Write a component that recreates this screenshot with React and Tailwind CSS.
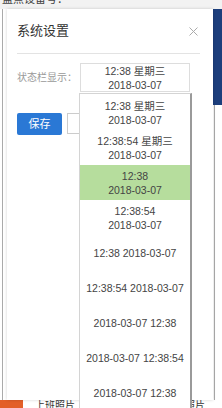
export default function App() {
  const items = [
    ["12:38 星期三", "2018-03-07"],
    ["12:38:54 星期三", "2018-03-07"],
    ["12:38", "2018-03-07"],
    ["12:38:54", "2018-03-07"],
    ["12:38 2018-03-07"],
    ["12:38:54 2018-03-07"],
    ["2018-03-07 12:38"],
    ["2018-03-07 12:38:54"],
    ["2018-03-07 12:38"],
  ];
  return (
    <div className="relative w-[222px] h-[408px] overflow-hidden bg-white font-['Liberation_Sans','Noto_Sans_CJK_SC',sans-serif]">
      {/* background page */}
      <div className="flex flex-col h-full">
        <div className="h-[9px] bg-[#f2f2f2] overflow-hidden">
          <div className="mt-[-7px] pl-[2px] text-[11px] leading-[12px] text-[#444] whitespace-nowrap">盘点设备号：</div>
        </div>
        <div className="flex flex-1">
          <div className="w-[7px] flex pl-[2px]">
            <div className="w-px bg-[#aaa]" />
          </div>
          <div className="flex-1" />
          <div className="w-[9px] flex flex-col">
            <div className="h-[96px] bg-[#1c3e7c]" />
            <div className="flex-1 flex pl-px">
              <div className="w-px bg-[#aaa]" />
            </div>
          </div>
        </div>
        <div className="h-[8px] flex items-start text-[10px] leading-[10px] text-[#333] whitespace-nowrap overflow-hidden">
          <div className="w-[23px] h-full bg-[#e35f28]" />
          <div className="ml-[12px] w-[55px] mt-[1px]">上班照片</div>
          <div className="w-[63px] h-full bg-[#e35f28]" />
          <div className="ml-[12px] mt-[1px]">下班照片</div>
        </div>
      </div>

      {/* modal */}
      <div className="absolute left-[7px] top-[9px] w-[206px] h-[391px] bg-white shadow-[0_0_3px_rgba(0,0,0,0.18)] flex flex-col">
        <div className="h-[44px] flex items-center justify-between pl-[10px] pr-[15px]">
          <span className="text-[13px] text-[#333]">系统设置</span>
          <svg width="9" height="9" viewBox="0 0 9 9">
            <path d="M0.5 0.5 L8.5 8.5 M8.5 0.5 L0.5 8.5" stroke="#aaa" strokeWidth="1" />
          </svg>
        </div>
        <div className="ml-[10px] mr-[13px] h-px bg-[#e3e3e3]" />
        <div className="mt-[9px] flex items-center pl-[10px]">
          <div className="w-[63px] text-[10px] text-[#999] whitespace-nowrap">状态栏显示：</div>
          <div className="w-[110px] h-[29px] border border-[#ddd] flex flex-col items-center justify-center text-[10.5px] leading-[14px] text-[#444]">
            <span>12:38 星期三</span>
            <span>2018-03-07</span>
          </div>
        </div>
        <div className="mt-[21px] flex items-start pl-[10px] gap-[5px]">
          <div className="w-[45px] h-[22px] rounded-[2px] bg-[#2a78d5] text-white text-[11px] flex items-center justify-center">保存</div>
          <div className="w-[40px] h-[21px] border border-[#ccc] bg-white" />
        </div>
      </div>

      {/* dropdown menu */}
      <div className="absolute left-[79px] top-[93px] w-[113px] bottom-0 bg-white border-l border-t border-[#d4d4d4] border-r-2 border-r-[#9a9a9a] pt-px">
        {items.map((lines, i) => (
          <div
            key={i}
            className={
              "h-[35px] flex flex-col items-center justify-center text-[10.5px] leading-[14px] text-[#444] whitespace-nowrap " +
              (i === 2 ? "bg-[#b6dd9d]" : "")
            }
          >
            {lines.map((l, j) => (
              <span key={j}>{l}</span>
            ))}
          </div>
        ))}
      </div>
    </div>
  );
}
